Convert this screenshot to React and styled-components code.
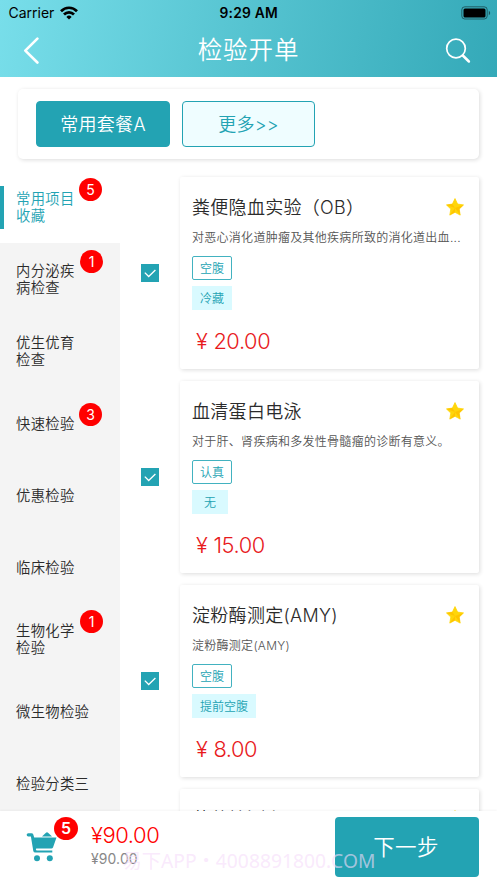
import React from 'react';
import styled, { createGlobalStyle, css } from 'styled-components';

const teal = '#23a3b3';
const latin = 'Inter, "Noto Sans CJK SC", sans-serif';

const GlobalStyle = createGlobalStyle`
  * { box-sizing: border-box; }
  body { margin: 0; background: #fff; overflow: hidden; }
`;

const Screen = styled.div`
  position: relative;
  width: 497px;
  height: 883px;
  display: flex;
  flex-direction: column;
  overflow: hidden;
  background: #fff;
  color: #2b2b2b;
  font-family: ${latin};
  font-weight: 350;
`;

const Header = styled.header`
  flex: none;
  height: 77px;
  background: linear-gradient(100deg, #78deea 0%, #55c3d0 50%, #34a9b8 100%);
`;

const StatusBar = styled.div`
  height: 26px;
  padding: 0 6px 0 8.5px;
  display: grid;
  grid-template-columns: 1fr auto 1fr;
  align-items: center;
  color: #000;
  font: 400 14px/26px ${latin};
`;

const Carrier = styled.div`
  display: flex;
  align-items: center;
  gap: 6px;
  letter-spacing: 0;
`;

const Clock = styled.div`
  font-weight: 600;
  font-size: 13.8px;
  letter-spacing: 0.25px;
  margin-right: 2px;
`;

const Battery = styled.svg`
  justify-self: end;
  margin-top: -1px;
`;

const NavBar = styled.div`
  height: 51px;
  padding: 0 26px 2px 23px;
  display: grid;
  grid-template-columns: 60px 1fr 57px;
  align-items: center;
  color: #fff;
`;

const NavTitle = styled.h1`
  margin: 0;
  text-align: center;
  font-size: 24.5px;
  line-height: 36px;
  font-weight: 350;
  letter-spacing: 0.9px;
  padding-bottom: 2px;
`;

const SearchIcon = styled.svg`
  justify-self: end;
`;

const Packages = styled.section`
  flex: none;
  margin: 12px 18px 0;
  width: 461px;
  height: 70px;
  padding: 12px 18px;
  display: flex;
  gap: 12px;
  border-radius: 5px;
  background: #fff;
  box-shadow: 1px 1px 4px rgba(0, 0, 0, 0.14);
`;

const PackageButton = styled.button`
  width: ${(p) => (p.$filled ? '134px' : '133px')};
  height: 46px;
  padding: 2px 0 0;
  border: 1px solid ${teal};
  border-radius: 4px;
  background: ${(p) => (p.$filled ? teal : '#effdff')};
  color: ${(p) => (p.$filled ? '#fff' : teal)};
  font: 350 18px/42px ${latin};
  letter-spacing: 0.3px;
`;

const Body = styled.main`
  flex: none;
  height: 640px;
  margin-top: 12px;
  display: flex;
  overflow: hidden;
`;

const Sidebar = styled.nav`
  flex: none;
  width: 120px;
  background: #f4f4f4;
`;

const Category = styled.div`
  display: flex;
  align-items: center;
  height: 72px;
  padding-left: 16px;
  font-size: 14.3px;
  line-height: 16.6px;
  letter-spacing: 0.35px;
  ${(p) =>
    p.$active &&
    css`
      padding-left: 0;
      background: #fff;
      color: ${teal};
      &::before {
        content: '';
        width: 4px;
        height: 43px;
        margin-right: 12px;
        background: ${teal};
      }
    `}
`;

const CategoryLabel = styled.span`
  position: relative;
  white-space: pre;
  margin-top: 2px;
`;

const CountBadge = styled.span`
  position: absolute;
  left: ${(p) => (p.$narrow ? '64px' : '63px')};
  top: -13px;
  width: 23px;
  height: 23px;
  border-radius: 50%;
  background: #f00;
  color: #fff;
  text-align: center;
  letter-spacing: 0;
  font: 400 14px/23px ${latin};
`;

const List = styled.div`
  width: 377px;
  padding: 6px 18px 0 21px;
  display: flex;
  flex-direction: column;
  gap: 12px;
`;

const Row = styled.div`
  flex: none;
  display: flex;
  align-items: center;
  gap: 21px;
`;

const Checkbox = styled.span`
  display: flex;
  align-items: center;
  justify-content: center;
  width: 18px;
  height: 18px;
  background: ${(p) => (p.$checked ? teal : 'transparent')};
`;

const Card = styled.article`
  width: 299px;
  height: 192px;
  padding: 16px 12px 0;
  border-radius: 2px;
  background: #fff;
  box-shadow: 1px 1px 4px rgba(0, 0, 0, 0.14);
`;

const CardHead = styled.div`
  display: flex;
  align-items: center;
  justify-content: space-between;
  height: 28px;
  padding-right: 3.5px;
`;

const CardTitle = styled.h2`
  margin: 2px 0 0;
  font-size: 18px;
  line-height: 28px;
  font-weight: 350;
  letter-spacing: 0.3px;
  white-space: nowrap;
`;

const Description = styled.p`
  height: 20px;
  margin: 7px 0 8px;
  color: #555;
  font-size: 12px;
  line-height: 20px;
  letter-spacing: 0.28px;
  white-space: nowrap;
`;

const Tags = styled.div`
  display: flex;
  flex-direction: column;
  align-items: flex-start;
  gap: 6px;
`;

const Tag = styled.span`
  height: 24px;
  min-width: 36px;
  padding: 1px 7px 0;
  text-align: center;
  border: 1px solid ${(p) => (p.$outlined ? '#42b2c0' : '#d9faff')};
  border-radius: ${(p) => (p.$outlined ? '2px' : '0')};
  background: ${(p) => (p.$outlined ? '#fff' : '#d9faff')};
  color: ${teal};
  font-size: 12px;
  line-height: 22px;
`;

const Price = styled.div`
  display: flex;
  gap: 6px;
  margin: 17px 0 0 4px;
  color: #e8191c;
  font: 350 21.8px/28px ${latin};
  letter-spacing: -0.4px;
`;

const Footer = styled.footer`
  flex: none;
  height: 72px;
  padding: 6px 18px 6px 26px;
  display: flex;
  align-items: flex-start;
  background: #fff;
  box-shadow: 0 -1px 2px rgba(0, 0, 0, 0.04);
  z-index: 1;
`;

const Cart = styled.div`
  position: relative;
  flex: none;
  width: 65px;
  padding-top: 14px;
`;

const CartBadge = styled.span`
  position: absolute;
  left: 28px;
  top: 0;
  width: 24px;
  height: 23px;
  border-radius: 50%;
  background: #f00;
  color: #fff;
  text-align: center;
  font: 600 16px/23px ${latin};
`;

const Totals = styled.div`
  flex: 1;
`;

const Total = styled.div`
  color: #f00;
  font: 350 22px/30px ${latin};
  letter-spacing: -0.45px;
  margin-top: 3px;
`;

const ListTotal = styled.div`
  color: #888;
  font: 400 13.9px/18px ${latin};
  letter-spacing: 0.15px;
`;

const NextButton = styled.button`
  width: 144px;
  height: 60px;
  padding: 0 2px 0 0;
  border: 0;
  border-radius: 4px;
  background: ${teal};
  color: #fff;
  font: 350 21.5px/58px ${latin};
  letter-spacing: 0.4px;
`;

const Watermark = styled.div`
  position: absolute;
  left: 122.5px;
  top: 847px;
  z-index: 2;
  color: rgba(246, 220, 250, 0.62);
  font: 400 19.25px/28px "Noto Sans", "Noto Sans CJK SC", sans-serif;
  white-space: nowrap;
`;

const categories = [
  { label: '常用项目\n收藏', count: 5, active: true },
  { label: '内分泌疾\n病检查', count: 1 },
  { label: '优生优育\n检查' },
  { label: '快速检验', count: 3 },
  { label: '优惠检验' },
  { label: '临床检验' },
  { label: '生物化学\n检验', count: 1 },
  { label: '微生物检验' },
  { label: '检验分类三' },
];

const items = [
  { title: '粪便隐血实验（OB）', description: '对恶心消化道肿瘤及其他疾病所致的消化道出血...', tags: ['空腹', '冷藏'], price: '20.00', checked: true },
  { title: '血清蛋白电泳', description: '对于肝、肾疾病和多发性骨髓瘤的诊断有意义。', tags: ['认真', '无'], price: '15.00', checked: true },
  { title: '淀粉酶测定(AMY)', description: '淀粉酶测定(AMY)', tags: ['空腹', '提前空腹'], price: '8.00', checked: true },
  { title: '葡萄糖测定', description: '', tags: [], price: '', checked: false },
];

const Wifi = () => (
  <svg width="18" height="14" viewBox="0 0 18 14" fill="none" stroke="#000" strokeWidth="2.7">
    <path d="M1 5.2C5.5.6 12.5.6 17 5.2" />
    <path d="M4 8.5c2.8-2.9 7.2-2.9 10 0" />
    <path d="M6.4 10.9a3.7 3.7 0 0 1 5.2 0L9 13.6z" fill="#000" stroke="none" />
  </svg>
);

const Star = () => (
  <svg width="18" height="18" viewBox="0 0 18 18">
    <path d="M9 .6l2.6 5.5 5.9.8-4.3 4.2 1 6L9 14.3l-5.2 2.8 1-6L.5 6.9l5.9-.8z" fill="#ffd60a" stroke="#ffd60a" strokeWidth="0.8" strokeLinejoin="round" />
    <path d="M9 10l8.4-3.1-4.2 4.2 1 6zM9 10L6.4 6.1.5 6.9zM9 10v4.3l-5.2 2.8z" fill="#ffc400" />
  </svg>
);

const CartIcon = () => (
  <svg width="32" height="31" viewBox="0 0 32 31" fill={teal}>
    <path d="M2.3 2.2h3.2q1.4 0 1.8 1.3l.9 3.1h22.3L27 16.4q-.4 1.1-1.7 1.1H10.6q-.9 0-.7 1t1 1h15.4v2.1H9.4q-1.8 0-2.1-1.7L4.9 5.5H2.3a1.65 1.65 0 0 1 0-3.3z" />
    <path d="M16 5.6l3.7-3.7q1.3-1.2 2.6 0L26 5.6z" />
    <circle cx="11" cy="27.2" r="3" />
    <circle cx="23.8" cy="27.2" r="3" />
  </svg>
);

export default function App() {
  return (
    <Screen>
      <GlobalStyle />
      <Header>
        <StatusBar>
          <Carrier>Carrier <Wifi /></Carrier>
          <Clock>9:29 AM</Clock>
          <Battery width="30" height="14" viewBox="0 0 30 14">
            <rect x=".8" y=".8" width="25.4" height="12.2" rx="3" fill="none" stroke="#000" strokeOpacity=".45" />
            <rect x="2.5" y="2.5" width="22" height="9" rx="1.5" />
            <path d="M27.8 4.8v4.4q1.4-.7 1.4-2.2t-1.4-2.2" fillOpacity=".5" />
          </Battery>
        </StatusBar>
        <NavBar>
          <svg width="18" height="28" viewBox="0 0 18 28" fill="none" stroke="#fff" strokeWidth="2.6" strokeLinecap="round" strokeLinejoin="round">
            <path d="M14.4 1.6L2.3 13.6 14.4 25.5" />
          </svg>
          <NavTitle>检验开单</NavTitle>
          <SearchIcon width="26" height="26" viewBox="0 0 26 26" fill="none" stroke="#fff" strokeLinecap="round">
            <circle cx="11" cy="10.5" r="9.3" strokeWidth="1.7" />
            <path d="M17.8 17.5l6.1 6" strokeWidth="2.5" />
          </SearchIcon>
        </NavBar>
      </Header>
      <Packages>
        <PackageButton $filled>常用套餐A</PackageButton>
        <PackageButton>更多&gt;&gt;</PackageButton>
      </Packages>
      <Body>
        <Sidebar>
          {categories.map((c) => (
            <Category key={c.label} $active={c.active}>
              <CategoryLabel>
                {c.label}
                {c.count && <CountBadge $narrow={c.count === 1}>{c.count}</CountBadge>}
              </CategoryLabel>
            </Category>
          ))}
        </Sidebar>
        <List>
          {items.map((item) => (
            <Row key={item.title}>
              <Checkbox $checked={item.checked}>
                {item.checked && (
                  <svg width="14" height="12" viewBox="0 0 14 12" fill="none" stroke="#fff" strokeWidth="1.3">
                    <path d="M1.8 5.6l3.9 3.9L12.4 3" />
                  </svg>
                )}
              </Checkbox>
              <Card>
                <CardHead>
                  <CardTitle>{item.title}</CardTitle>
                  <Star />
                </CardHead>
                <Description>{item.description}</Description>
                <Tags>
                  {item.tags.map((tag, i) => <Tag key={tag} $outlined={i === 0}>{tag}</Tag>)}
                </Tags>
                {item.price && <Price><span>¥</span><span>{item.price}</span></Price>}
              </Card>
            </Row>
          ))}
        </List>
      </Body>
      <Footer>
        <Cart>
          <CartIcon />
          <CartBadge>5</CartBadge>
        </Cart>
        <Totals>
          <Total>¥90.00</Total>
          <ListTotal>¥90.00</ListTotal>
        </Totals>
        <NextButton>下一步</NextButton>
      </Footer>
      <Watermark>易下APP・4008891800.COM</Watermark>
    </Screen>
  );
}
